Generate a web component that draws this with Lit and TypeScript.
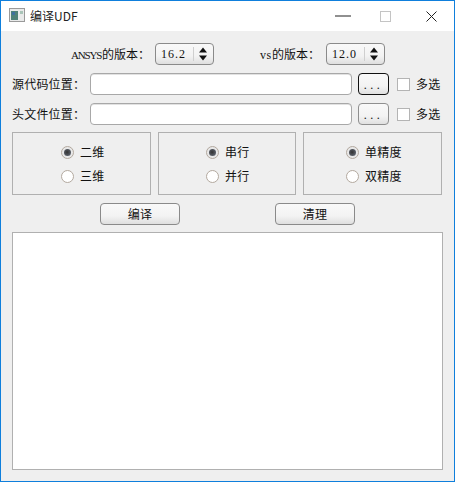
import { LitElement, html, css } from "lit";
import { customElement } from "lit/decorators.js";

const updown = html`<svg class="arrows" width="12" height="16" viewBox="0 0 12 16"><path d="M6 1.5 L10 6.5 H2 Z M2 9.5 H10 L6 14.5 Z" fill="#111"/></svg>`;

@customElement("app-root")
export class AppRoot extends LitElement {
  static styles = css`
    :host { display: block; width: 455px; height: 482px; font-family: "Liberation Serif", "Noto Sans CJK SC", serif; font-size: 12px; color: #111; }
    * { box-sizing: border-box; }
    .window { width: 455px; height: 482px; display: flex; flex-direction: column; border: 1px solid #0f7fdc; background: #efefef; }
    .titlebar { height: 30px; flex: none; background: #fff; display: flex; align-items: center; padding-left: 8px; }
    .app-icon { flex: none; margin: 0 5px 2px 0; }
    .title { font-family: "Noto Sans CJK SC", sans-serif; font-size: 12px; flex: 1; color: #222; margin-bottom: 2px; }
    .ctl { width: 45px; height: 30px; display: flex; align-items: center; justify-content: center; flex: none; }
    .ctl.min { width: 48px; }
    .ctl.max { width: 42px; padding-right: 5px; }
    .content { flex: 1; display: flex; flex-direction: column; padding: 12px 11px 11px 11px; }
    .versions { display: flex; height: 22px; align-items: center; }
    .versions .l1 { margin-left: 59px; width: 84px; white-space: nowrap; }
    .versions .l2 { margin-left: 46px; width: 66px; white-space: nowrap; }
    .ansys { font-size: 11px; letter-spacing: -1.2px; margin-right: 1px; }
    .vs { letter-spacing: 0.6px; }
    .spin { width: 59px; height: 22px; border: 1px solid #8a8a8a; border-radius: 4px; background: linear-gradient(#f9f9f9 0%, #f3f3f3 60%, #dfdfdf 100%); display: flex; align-items: center; }
    .spin .val { width: 38px; padding-left: 5px; height: 14px; line-height: 14px; border-right: 1px solid #cfcfcf; color: #111; letter-spacing: 1px; }
    .arrows { margin-left: 3px; }
    .path-row { display: flex; align-items: center; height: 22px; margin-top: 8px; }
    .path-row .lbl { width: 78px; font-size: 12px; letter-spacing: 0.2px; }
    .input { width: 262px; height: 22px; background: #fff; border: 1px solid #a8a8a8; border-radius: 4px; box-shadow: inset 0 1px #e2e2e2; }
    .dots { width: 31px; height: 22px; margin-left: 6px; border: 1px solid #8f8f8f; border-radius: 4px; background: linear-gradient(#f9f9f9 0%, #f3f3f3 60%, #e0e0e0 100%); display: flex; align-items: center; justify-content: center; font-size: 12px; letter-spacing: 3.5px; padding-top: 2px; }
    .dots.focus { border-color: #111; }
    .check { width: 13px; height: 13px; margin-left: 8px; background: #fff; border: 1px solid #b4b4b4; }
    .multi { margin-left: 6px; font-size: 12px; letter-spacing: 0.2px; }
    .groups { display: grid; grid-template-columns: 139px 138px 139px; gap: 7px; margin-top: 7px; }
    .group { height: 63px; border: 1px solid #b0b0b0; display: flex; flex-direction: column; gap: 10px; padding: 12px 0 0 48px; }
    .group.mid { padding-left: 47px; }
    .group.wide { padding-left: 42px; }
    .radio-row { display: flex; align-items: center; height: 14px; gap: 6px; letter-spacing: 0.2px; }
    .radio { width: 13px; height: 13px; border-radius: 50%; background: #fff; border: 1px solid #b3a99f; display: flex; align-items: center; justify-content: center; }
    .radio.on { background: #e8e8e8; }
    .radio.on i { width: 7px; height: 7px; border-radius: 50%; background: radial-gradient(circle at 45% 45%, #333, #6a7280); display: block; }
    .actions { display: flex; margin-top: 8px; padding-left: 88px; gap: 95px; }
    .btn { width: 80px; height: 22px; border: 1px solid #8a8a8a; border-radius: 4px; background: linear-gradient(#f9f9f9 0%, #f3f3f3 60%, #dfdfdf 100%); display: flex; align-items: center; justify-content: center; font-size: 12px; letter-spacing: 0.2px; }
    .log { flex: 1; margin-top: 7px; width: 431px; background: #fff; border: 1px solid #b0b0b0; }
  `;

  private radio(label: string, on: boolean) {
    return html`<div class="radio-row"><span class="radio ${on ? "on" : ""}">${on ? html`<i></i>` : ""}</span><span>${label}</span></div>`;
  }

  render() {
    return html`
      <div class="window">
        <div class="titlebar">
          <svg class="app-icon" width="16" height="14" viewBox="0 0 16 14">
            <rect x="0.5" y="0.5" width="15" height="13" fill="#e9eaea" stroke="#9a9a9a"/>
            <rect x="2" y="3" width="7" height="9" fill="#4f8078"/>
            <rect x="3" y="4" width="3" height="3" fill="#3f6f9f"/>
            <rect x="11" y="3" width="3" height="3" fill="#a9c4b8"/>
          </svg>
          <span class="title">编译UDF</span>
          <span class="ctl min"><svg width="16" height="2" viewBox="0 0 16 2"><rect width="16" height="1" y="0.5" fill="#222"/></svg></span>
          <span class="ctl max"><svg width="11" height="11" viewBox="0 0 11 11"><rect x="0.5" y="0.5" width="10" height="10" fill="none" stroke="#c4c4c4"/></svg></span>
          <span class="ctl"><svg width="11" height="11" viewBox="0 0 11 11"><path d="M0.5 0.5 L10.5 10.5 M10.5 0.5 L0.5 10.5" stroke="#222" fill="none"/></svg></span>
        </div>
        <div class="content">
          <div class="versions">
            <span class="l1"><span class="ansys">ANSYS</span>的版本：</span>
            <div class="spin"><span class="val">16.2</span>${updown}</div>
            <span class="l2"><span class="vs">vs</span>的版本：</span>
            <div class="spin"><span class="val">12.0</span>${updown}</div>
          </div>
          <div class="path-row">
            <span class="lbl">源代码位置：</span><div class="input"></div>
            <div class="dots focus">...</div><div class="check"></div><span class="multi">多选</span>
          </div>
          <div class="path-row">
            <span class="lbl">头文件位置：</span><div class="input"></div>
            <div class="dots">...</div><div class="check"></div><span class="multi">多选</span>
          </div>
          <div class="groups">
            <div class="group">${this.radio("二维", true)}${this.radio("三维", false)}</div>
            <div class="group mid">${this.radio("串行", true)}${this.radio("并行", false)}</div>
            <div class="group wide">${this.radio("单精度", true)}${this.radio("双精度", false)}</div>
          </div>
          <div class="actions">
            <div class="btn">编译</div>
            <div class="btn">清理</div>
          </div>
          <div class="log"></div>
        </div>
      </div>
    `;
  }
}
